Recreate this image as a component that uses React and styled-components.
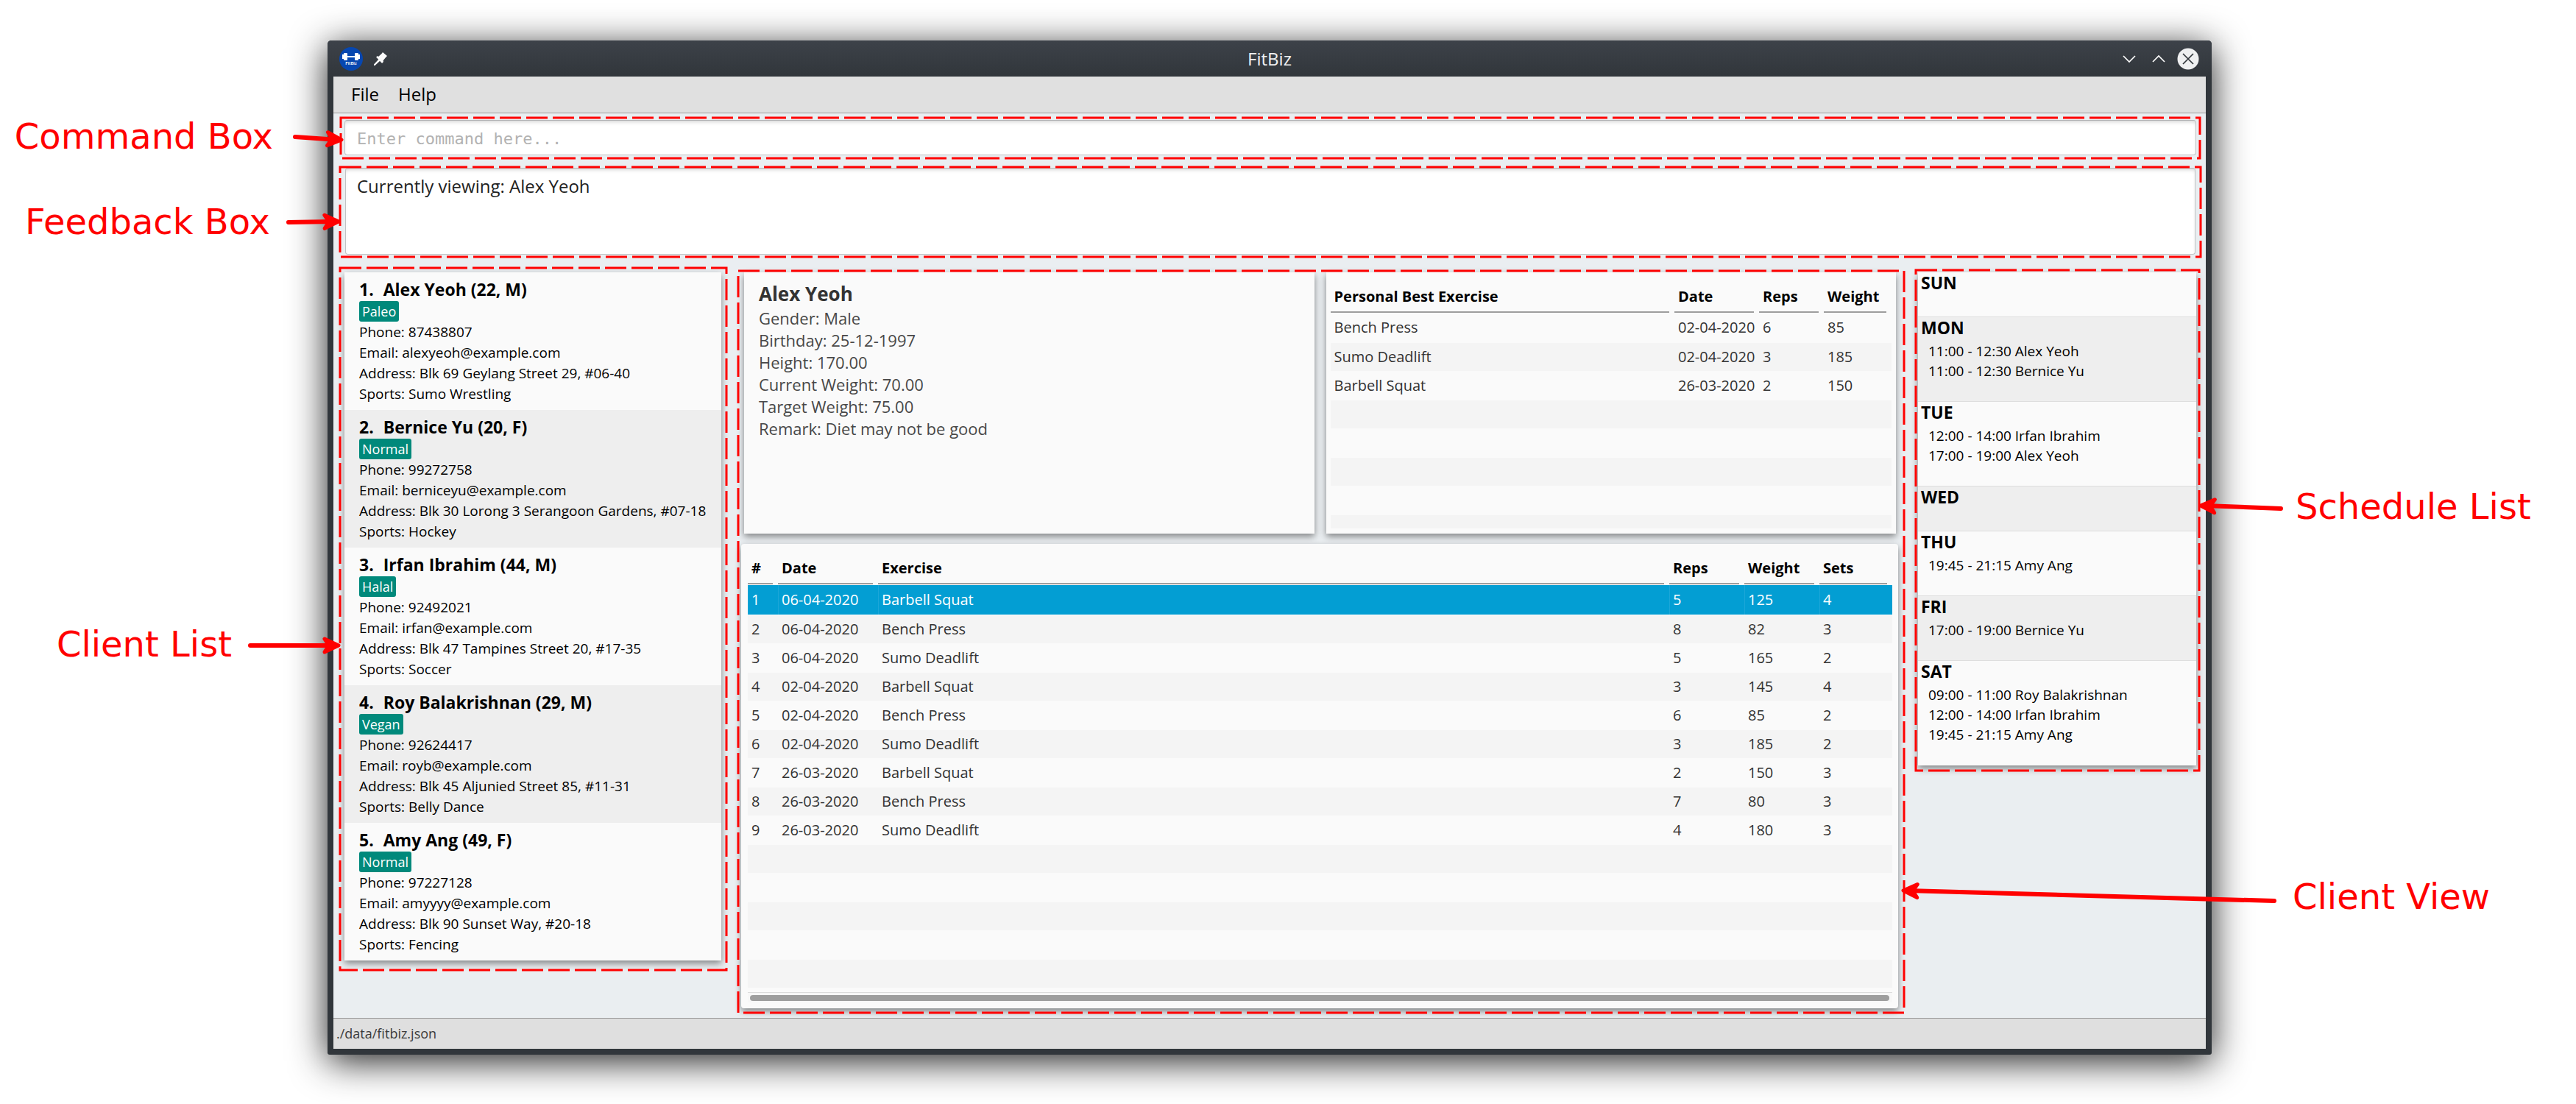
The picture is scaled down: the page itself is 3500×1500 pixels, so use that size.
import React from "react";
import styled, { createGlobalStyle, css } from "styled-components";

const sans = `"Open Sans", "Noto Sans", sans-serif`;
const mono = `"DejaVu Sans Mono", "Liberation Mono", monospace`;
const red = "#ff0000";

const GlobalStyle = createGlobalStyle`
  *, *::before, *::after { box-sizing: border-box; }
  body {
    margin: 0;
    background: #fff;
    color: #000;
    font-family: ${sans};
  }
  h1, h2, h3, p, ul, ol { margin: 0; padding: 0; }
  ul, ol { list-style: none; }
`;

const Page = styled.main`
  min-height: 100vh;
  padding: 55px 495px 67px 445px;
`;

/* ---------- window frame ---------- */

const Window = styled.section`
  padding: 0 8px 8px;
  border-radius: 5px 5px 3px 3px;
  background: #31363b;
  box-shadow: 0 9px 50px rgba(0, 0, 0, 0.88);
`;

const TitleBar = styled.header`
  display: grid;
  grid-template-columns: 1fr auto 1fr;
  align-items: center;
  height: 49px;
  margin: 0 -8px;
  padding: 0 16px;
  border-radius: 5px 5px 0 0;
  background: linear-gradient(#3d4249, #31363b);
`;

const TitleText = styled.h1`
  color: #eff0f1;
  font-size: 24px;
  font-weight: 400;
  line-height: 32px;
`;

const TitleGroup = styled.div`
  display: flex;
  align-items: center;
  justify-content: ${(p) => (p.$end ? "flex-end" : "flex-start")};
  gap: 8px;
`;

const IconButton = styled.button`
  display: flex;
  align-items: center;
  justify-content: center;
  width: 32px;
  height: 32px;
  padding: 0;
  border: 0;
  background: none;
  color: #fcfcfc;
`;

const MenuBar = styled.nav`
  display: flex;
  gap: 26px;
  height: 50px;
  padding: 0 24px 2px;
  border-bottom: 1px solid #9c9c9c;
  background: #e0e0e0;
`;

const MenuButton = styled.button`
  padding: 0;
  border: 0;
  background: none;
  color: #000;
  font: 400 24px/32px ${sans};
`;

const Body = styled.div`
  padding: 9px 13px 13px 15px;
  background: #eaeef1;
`;

const StatusBar = styled.footer`
  padding: 0 4px;
  border-top: 1px solid #999;
  background: #dfdfdf;
  color: #3c3c3c;
  font-size: 18px;
  line-height: 41px;
`;

/* ---------- annotations ---------- */

const Annotated = styled.div`
  position: relative;
  margin: ${(p) => p.$margin || 0};
`;

const DashSvg = styled.svg`
  position: absolute;
  inset: ${(p) => p.$inset};
  width: ${(p) => p.$size};
  height: ${(p) => p.$tall};
  overflow: visible;
  pointer-events: none;
  z-index: 1;
`;

function Outline({ top, right, bottom, left }) {
  return (
    <DashSvg
      aria-hidden="true"
      $inset={`${-top}px auto auto ${-left}px`}
      $size={`calc(100% + ${left + right}px)`}
      $tall={`calc(100% + ${top + bottom}px)`}
    >
      <rect width="100%" height="100%" fill="none" stroke={red} strokeWidth="3" strokeDasharray="29 7" />
    </DashSvg>
  );
}

const CalloutBox = styled.p`
  position: absolute;
  z-index: 2;
  top: ${(p) => p.$top}px;
  ${(p) =>
    p.$side === "left"
      ? css`right: calc(100% + ${p.$away}px);`
      : css`left: calc(100% + ${p.$away}px);`}
  display: flex;
  flex-direction: ${(p) => (p.$side === "left" ? "row" : "row-reverse")};
  align-items: center;
  gap: ${(p) => p.$gap}px;
  color: ${red};
  font-family: "DejaVu Sans", sans-serif;
  font-size: 48px;
  line-height: 56px;
  white-space: nowrap;
`;

const ArrowSvg = styled.svg`
  flex: none;
  overflow: visible;
`;

function Arrow({ side, length, tail, tip }) {
  const angle = (Math.atan2(tip - tail, length) * 180) / Math.PI;
  const flip = side === "left" ? "" : `translate(${length} 0) scale(-1 1)`;
  return (
    <ArrowSvg width={length} height="40" viewBox={`0 0 ${length} 40`} aria-hidden="true">
      <g transform={flip} fill={red} stroke={red} strokeWidth="6" strokeLinecap="round" strokeLinejoin="round">
        <path d={`M5 ${tail}L${length - 8} ${tip}`} />
        <path
          strokeWidth="5"
          transform={`translate(${length} ${tip}) rotate(${angle})`}
          d="M-22 -9L-3 0L-22 9L-16 0Z"
        />
      </g>
    </ArrowSvg>
  );
}

function Callout({ side, top, away, gap = 20, length, tail, tip, children }) {
  return (
    <CalloutBox $side={side} $top={top - 28} $away={away} $gap={gap}>
      {children}
      <Arrow side={side} length={length} tail={tail} tip={tip} />
    </CalloutBox>
  );
}

/* ---------- command and feedback ---------- */

const field = css`
  display: block;
  width: 100%;
  border: 1px solid #c0c2c4;
  border-top-color: #b0b2b4;
  border-radius: 4px;
  outline: 0;
  background: #fff;
  box-shadow: inset 0 4px 5px -2px rgba(0, 0, 0, 0.16);
`;

const CommandInput = styled.input`
  ${field}
  height: 48px;
  padding: 2px 16px 0;
  color: #000;
  font: 400 22px/32px ${mono};
  &::placeholder { color: #b2b2b2; opacity: 1; }
`;

const FeedbackText = styled.textarea`
  ${field}
  height: 118px;
  padding: 8px 15px;
  resize: none;
  color: #222;
  font: 400 24px/32px ${sans};
`;

/* ---------- panels ---------- */

const Columns = styled.div`
  display: grid;
  grid-template-columns: 512px minmax(0, 1fr) 378px;
  align-items: start;
  gap: 27px;
  margin-top: 24px;
`;

const Card = styled.section`
  border-radius: ${(p) => p.$radius || 0}px;
  background: #fafafa;
  box-shadow: 0 4px 9px rgba(0, 0, 0, 0.45);
`;

const ClientItem = styled.li`
  padding: 7px 20px 8px;
  font-size: 19px;
  line-height: 28px;
  white-space: nowrap;
  &:nth-child(even) { background: #eeeeee; }
`;

const ClientName = styled.h2`
  display: flex;
  gap: 13px;
  font-size: 23px;
  line-height: 32px;
`;

const Tag = styled.span`
  display: block;
  width: fit-content;
  padding: 0 4px;
  border-radius: 3px;
  background: #00897b;
  color: #fff;
  font-size: 18px;
`;

const ViewColumn = styled.div`
  display: grid;
  gap: 14px;
`;

const TopCards = styled.div`
  display: grid;
  grid-template-columns: repeat(2, minmax(0, 1fr));
  gap: 16px;
  padding: 0 3px 0 4px;
`;

const DetailCard = styled(Card)`
  padding: 11px 20px;
  color: #484848;
  font-size: 22px;
  line-height: 30px;
`;

const DetailName = styled.h2`
  color: #333;
  font-size: 26px;
  line-height: 36px;
`;

const BestCard = styled(Card)`
  padding: 0 6px 7px;
`;

const LogCard = styled(Card)`
  padding: 0 8px 8px 9px;
`;

const TableClip = styled.div`
  height: ${(p) => p.$height}px;
  overflow: hidden;
`;

const Table = styled.table`
  width: 100%;
  border-collapse: collapse;
  table-layout: fixed;
  font-size: 20px;
  text-align: left;
  white-space: nowrap;
`;

const Col = styled.col`
  width: ${(p) => (p.$width ? `${p.$width}px` : "auto")};
`;

const HeadCell = styled.th`
  height: 56px;
  padding: 0 7px 1px 0;
`;

const HeadLabel = styled.span`
  display: block;
  padding: 12px 0 0 5px;
  border-bottom: 2px solid #9e9e9e;
  line-height: 41px;
`;

const BodyRow = styled.tr`
  background: #fafafa;
  color: #333;
  &:nth-child(even) { background: #f4f4f4; }
  ${(p) =>
    p.$selected &&
    css`
      && { background: #039ed3; }
      color: #fff;
      td { height: 40px; box-shadow: inset 1px 0 #1ba6d8; }
    `}
`;

const Cell = styled.td`
  height: 39px;
  padding: 0 0 0 5px;
  border-bottom: 1px solid #fafafa;
  line-height: 28px;
`;

const ScrollTrack = styled.div`
  height: 14px;
  padding: 3px 4px 0 3px;
  border-top: 1px solid #dcdcdc;
  background: #f7f7f7;
`;

const ScrollThumb = styled.div`
  height: 8px;
  border-radius: 4px;
  background: #9e9e9e;
`;

const DayItem = styled.li`
  padding: 0 4px 28px;
  &:nth-child(even) { background: #eeeeee; }
  & + & { box-shadow: 0 -1px #dedede; }
`;

const DayName = styled.h2`
  margin-bottom: 4px;
  font-size: 23px;
  line-height: 29px;
`;

const Slot = styled.li`
  padding-left: 10px;
  font-size: 19px;
  line-height: 27px;
  white-space: nowrap;
`;

/* ---------- data ---------- */

const clients = [
  ["Alex Yeoh (22, M)", "Paleo", "87438807", "alexyeoh@example.com", "Blk 69 Geylang Street 29, #06-40", "Sumo Wrestling"],
  ["Bernice Yu (20, F)", "Normal", "99272758", "berniceyu@example.com", "Blk 30 Lorong 3 Serangoon Gardens, #07-18", "Hockey"],
  ["Irfan Ibrahim (44, M)", "Halal", "92492021", "irfan@example.com", "Blk 47 Tampines Street 20, #17-35", "Soccer"],
  ["Roy Balakrishnan (29, M)", "Vegan", "92624417", "royb@example.com", "Blk 45 Aljunied Street 85, #11-31", "Belly Dance"],
  ["Amy Ang (49, F)", "Normal", "97227128", "amyyyy@example.com", "Blk 90 Sunset Way, #20-18", "Fencing"],
];

const details = [
  "Gender: Male",
  "Birthday: 25-12-1997",
  "Height: 170.00",
  "Current Weight: 70.00",
  "Target Weight: 75.00",
  "Remark: Diet may not be good",
];

const bestHead = ["Personal Best Exercise", "Date", "Reps", "Weight"];
const bestCols = [0, 115, 88, 92];
const bests = [
  ["Bench Press", "02-04-2020", "6", "85"],
  ["Sumo Deadlift", "02-04-2020", "3", "185"],
  ["Barbell Squat", "26-03-2020", "2", "150"],
];

const logHead = ["#", "Date", "Exercise", "Reps", "Weight", "Sets"];
const logCols = [41, 136, 0, 102, 102, 99];
const logs = [
  ["1", "06-04-2020", "Barbell Squat", "5", "125", "4"],
  ["2", "06-04-2020", "Bench Press", "8", "82", "3"],
  ["3", "06-04-2020", "Sumo Deadlift", "5", "165", "2"],
  ["4", "02-04-2020", "Barbell Squat", "3", "145", "4"],
  ["5", "02-04-2020", "Bench Press", "6", "85", "2"],
  ["6", "02-04-2020", "Sumo Deadlift", "3", "185", "2"],
  ["7", "26-03-2020", "Barbell Squat", "2", "150", "3"],
  ["8", "26-03-2020", "Bench Press", "7", "80", "3"],
  ["9", "26-03-2020", "Sumo Deadlift", "4", "180", "3"],
];

const week = [
  ["SUN", []],
  ["MON", ["11:00 - 12:30 Alex Yeoh", "11:00 - 12:30 Bernice Yu"]],
  ["TUE", ["12:00 - 14:00 Irfan Ibrahim", "17:00 - 19:00 Alex Yeoh"]],
  ["WED", []],
  ["THU", ["19:45 - 21:15 Amy Ang"]],
  ["FRI", ["17:00 - 19:00 Bernice Yu"]],
  ["SAT", ["09:00 - 11:00 Roy Balakrishnan", "12:00 - 14:00 Irfan Ibrahim", "19:45 - 21:15 Amy Ang"]],
];

/* ---------- pieces ---------- */

function DataTable({ label, head, cols, rows, total, selected }) {
  const fillers = Array.from({ length: total - rows.length });
  return (
    <Table aria-label={label}>
      <colgroup>
        {cols.map((w, i) => (
          <Col key={i} $width={w} />
        ))}
      </colgroup>
      <thead>
        <tr>
          {head.map((h) => (
            <HeadCell key={h} scope="col">
              <HeadLabel>{h}</HeadLabel>
            </HeadCell>
          ))}
        </tr>
      </thead>
      <tbody>
        {rows.map((row, r) => (
          <BodyRow key={r} $selected={r === selected}>
            {row.map((value, c) => (
              <Cell key={c}>{value}</Cell>
            ))}
          </BodyRow>
        ))}
        {fillers.map((_, i) => (
          <BodyRow key={`empty-${i}`} aria-hidden="true">
            <Cell colSpan={head.length} />
          </BodyRow>
        ))}
      </tbody>
    </Table>
  );
}

function AppLogo() {
  return (
    <svg width="32" height="32" viewBox="0 0 32 32" role="img" aria-label="FitBiz logo">
      <circle cx="16" cy="16" r="16" fill="#0747b0" />
      <g fill="#fff">
        <rect x="4" y="10" width="2" height="6" />
        <rect x="6" y="8" width="5" height="10" rx="1" />
        <rect x="11" y="12" width="10" height="2" />
        <rect x="21" y="8" width="5" height="10" rx="1" />
        <rect x="26" y="10" width="2" height="6" />
      </g>
      <text x="16" y="24" fill="#fff" fontFamily="Lato, sans-serif" fontSize="6" fontWeight="700" textAnchor="middle">
        FitBiz
      </text>
    </svg>
  );
}

function PinIcon() {
  return (
    <svg width="18" height="18" viewBox="0 0 18 18" aria-hidden="true">
      <g fill="currentColor">
        <path d="M12 0L18 5L16.500 6.500L12 12L5.500 6.500L10.500 2Z" />
        <path d="M3 6.500L5 5L13 12L12 14.500L10.500 14.500Z" />
        <path d="M6.500 9.500L8.500 11.500L1.500 18L0 18L0 16.500Z" />
      </g>
    </svg>
  );
}

function Stroke({ d, color = "currentColor", width = 18 }) {
  return (
    <svg width={width} height={width} viewBox="0 0 18 18" aria-hidden="true">
      <path d={d} fill="none" stroke={color} strokeWidth="1.700" />
    </svg>
  );
}

function CloseIcon() {
  return (
    <svg width="30" height="30" viewBox="0 0 30 30" aria-hidden="true">
      <circle cx="15" cy="15" r="14.500" fill="#eff0f1" />
      <path d="M8 8L22 22M22 8L8 22" fill="none" stroke="#31363b" strokeWidth="1.700" />
    </svg>
  );
}

export default function App() {
  return (
    <>
      <GlobalStyle />
      <Page>
        <Window>
          <TitleBar>
            <TitleGroup>
              <AppLogo />
              <IconButton aria-label="Keep window above others">
                <PinIcon />
              </IconButton>
            </TitleGroup>
            <TitleText>FitBiz</TitleText>
            <TitleGroup $end>
              <IconButton aria-label="Minimize">
                <Stroke d="M1 5L9 13L17 5" />
              </IconButton>
              <IconButton aria-label="Maximize">
                <Stroke d="M1 13L9 5L17 13" />
              </IconButton>
              <IconButton aria-label="Close">
                <CloseIcon />
              </IconButton>
            </TitleGroup>
          </TitleBar>

          <MenuBar aria-label="Main menu">
            <MenuButton>File</MenuButton>
            <MenuButton>Help</MenuButton>
          </MenuBar>

          <Body>
            <Annotated>
              <CommandInput aria-label="Command" placeholder="Enter command here..." />
              <Outline top={3} right={5} bottom={4} left={5} />
              <Callout side="left" top={22} away={1} gap={25} length={71} tail={21} tip={25}>
                Command Box
              </Callout>
            </Annotated>

            <Annotated $margin="17px 1px 0">
              <FeedbackText aria-label="Feedback" readOnly value="Currently viewing: Alex Yeoh" />
              <Outline top={1} right={7} bottom={3} left={7} />
              <Callout side="left" top={73} away={6} length={76} tail={21} tip={20}>
                Feedback Box
              </Callout>
            </Annotated>

            <Columns>
              <Annotated>
                <Card as="ol" aria-label="Clients">
                  {clients.map(([name, tag, phone, email, address, sports], i) => (
                    <ClientItem key={name}>
                      <ClientName>
                        <span>{i + 1}.</span>
                        <span>{name}</span>
                      </ClientName>
                      <Tag>{tag}</Tag>
                      <p>Phone: {phone}</p>
                      <p>Email: {email}</p>
                      <p>Address: {address}</p>
                      <p>Sports: {sports}</p>
                    </ClientItem>
                  ))}
                </Card>
                <Outline top={6} right={7} bottom={13} left={6} />
                <Callout side="left" top={505} away={5} length={128} tail={22} tip={22}>
                  Client List
                </Callout>
              </Annotated>

              <Annotated>
                <ViewColumn>
                  <TopCards>
                    <DetailCard>
                      <DetailName>Alex Yeoh</DetailName>
                      {details.map((line) => (
                        <p key={line}>{line}</p>
                      ))}
                    </DetailCard>
                    <BestCard>
                      <TableClip $height={348}>
                        <DataTable label="Personal bests" head={bestHead} cols={bestCols} rows={bests} total={8} />
                      </TableClip>
                    </BestCard>
                  </TopCards>
                  <LogCard $radius={4}>
                    <TableClip $height={609}>
                      <DataTable label="Exercise log" head={logHead} cols={logCols} rows={logs} total={14} selected={0} />
                    </TableClip>
                    <ScrollTrack>
                      <ScrollThumb />
                    </ScrollTrack>
                  </LogCard>
                </ViewColumn>
                <Outline top={2} right={8} bottom={6} left={4} />
                <Callout side="right" top={848} away={4} length={512} tail={26} tip={12}>
                  Client View
                </Callout>
              </Annotated>

              <Annotated>
                <Card as="ol" aria-label="Schedule">
                  {week.map(([day, slots]) => (
                    <DayItem key={day}>
                      <DayName>{day}</DayName>
                      <ul>
                        {slots.map((slot) => (
                          <Slot key={slot}>{slot}</Slot>
                        ))}
                      </ul>
                    </DayItem>
                  ))}
                </Card>
                <Outline top={3} right={4} bottom={7} left={3} />
                <Callout side="right" top={318} away={3} gap={15} length={117} tail={23} tip={19}>
                  Schedule List
                </Callout>
              </Annotated>
            </Columns>
          </Body>

          <StatusBar>./data/fitbiz.json</StatusBar>
        </Window>
      </Page>
    </>
  );
}
